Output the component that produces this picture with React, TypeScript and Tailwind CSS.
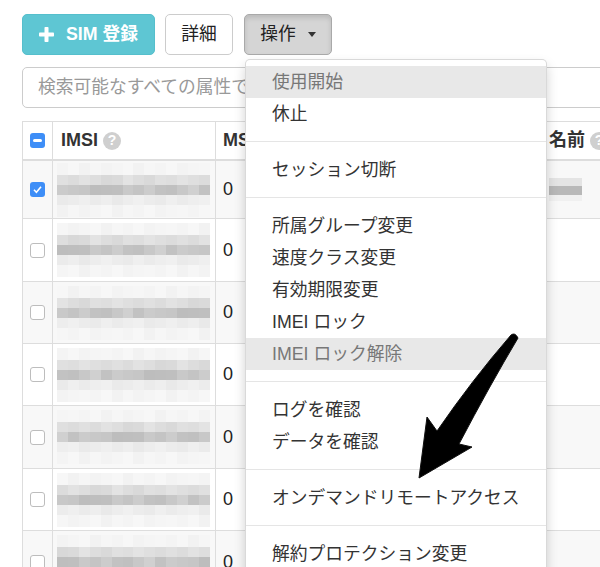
import React from "react";

const FONT = { fontFamily: '"Liberation Sans", "Noto Sans CJK JP", sans-serif' };

const faint = ["#f4f4f4", "#f7f7f7", "#f2f2f2", "#f6f6f6", "#f3f3f3", "#f5f5f5", "#f7f7f7", "#f2f2f2", "#f6f6f6", "#f4f4f4", "#f7f7f7", "#f3f3f3", "#f5f5f5", "#f6f6f6"];
const light = ["#e0e0e0", "#dcdcdc", "#e2e2e2", "#dedede", "#d8d8d8", "#dadada", "#e3e3e3", "#dddddd", "#d9d9d9", "#e0e0e0", "#dedede", "#e3e3e3", "#dfdfdf", "#dcdcdc"];
const dark = ["#c2c2c2", "#cbcbcb", "#c8c8c8", "#c6c6c6", "#bdbdbd", "#bebebe", "#bfbfbf", "#c9c9c9", "#c4c4c4", "#cccccc", "#c2c2c2", "#c0c0c0", "#c8c8c8", "#d0d0d0"];
const light2 = ["#eaeaea", "#ececec", "#efefef", "#ebebeb", "#eeeeee", "#e9e9e9", "#ededed", "#f0f0f0", "#ececec", "#eaeaea", "#efefef", "#ebebeb", "#eeeeee", "#f0f0f0"];

function Band({ shades, h, shift }: { shades: string[]; h: number; shift: number }) {
  return (
    <div className="flex" style={{ height: h }}>
      {shades.map((_, i) => (
        <div key={i} className="flex-1" style={{ background: shades[(i + shift) % shades.length] }} />
      ))}
    </div>
  );
}

function Mosaic({ shift }: { shift: number }) {
  return (
    <div className="w-[153px] flex flex-col">
      <Band shades={faint} h={12} shift={shift} />
      <Band shades={light} h={10} shift={shift} />
      <Band shades={dark} h={10} shift={shift + 1} />
      <Band shades={light2} h={10} shift={shift} />
      <Band shades={faint} h={12} shift={shift + 2} />
    </div>
  );
}

function Help() {
  return (
    <span className="ml-[5px] inline-flex w-[18px] h-[18px] rounded-full bg-[#cfcfcf] text-white text-[14px] font-bold items-center justify-center">
      ?
    </span>
  );
}

const rowHeights = [58, 63, 62, 62, 63, 62, 63];

type Item = { label: string; muted?: boolean } | "divider";

const menu: Item[] = [
  { label: "使用開始", muted: true },
  { label: "休止" },
  "divider",
  { label: "セッション切断" },
  "divider",
  { label: "所属グループ変更" },
  { label: "速度クラス変更" },
  { label: "有効期限変更" },
  { label: "IMEI ロック" },
  { label: "IMEI ロック解除", muted: true },
  "divider",
  { label: "ログを確認" },
  { label: "データを確認" },
  "divider",
  { label: "オンデマンドリモートアクセス" },
  "divider",
  { label: "解約プロテクション変更" },
];

export default function App() {
  return (
    <div className="relative w-[600px] h-[567px] overflow-hidden bg-white text-[#333]" style={FONT}>
      <div className="w-[760px] pl-[22px] pt-[14px]">
        {/* toolbar */}
        <div className="flex items-center">
          <button className="w-[133px] h-[41px] rounded-[5px] bg-[#5ec6d3] border border-[#55bfcc] text-white text-[17.75px] font-bold flex items-center justify-center gap-[12px]">
            <svg width="15" height="15" viewBox="0 0 15 15">
              <rect x="5.5" y="0" width="4" height="15" rx="0.8" fill="white" />
              <rect x="0" y="5.5" width="15" height="4" rx="0.8" fill="white" />
            </svg>
            SIM 登録
          </button>
          <button className="ml-[10px] w-[68px] h-[41px] rounded-[5px] bg-white border border-[#ccc] text-[17.75px] text-[#222]">
            詳細
          </button>
          <button className="ml-[11px] w-[88px] h-[41px] rounded-[5px] bg-[#d5d5d5] border border-[#a9a9a9] shadow-[inset_0_3px_5px_rgba(0,0,0,0.125)] text-[17.75px] text-[#222] flex items-center justify-center gap-[12px]">
            操作
            <span className="w-0 h-0 border-l-[4.5px] border-r-[4.5px] border-t-[5px] border-l-transparent border-r-transparent border-t-[#333]" />
          </button>
        </div>

        {/* search */}
        <div className="mt-[12px] h-[41px] w-[700px] rounded-[5px] border border-[#ccc] flex items-center pl-[15px] text-[17.75px] text-[#999]">
          検索可能なすべての属性で検索
        </div>

        {/* table */}
        <div className="mt-[13px] w-[720px] border-t border-l border-[#ddd]">
          <div className="flex h-[39px] border-b-2 border-[#ddd] font-bold text-[18px] text-[#333]">
            <div className="w-[30px] border-r border-[#ddd] flex items-center justify-center">
              <span className="w-[15px] h-[15px] rounded-[3px] bg-[#3e8ef7] flex items-center justify-center">
                <span className="w-[9px] h-[2.5px] bg-white rounded-full" />
              </span>
            </div>
            <div className="w-[163px] border-r border-[#ddd] flex items-center px-[8px]">
              IMSI
              <Help />
            </div>
            <div className="w-[325px] border-r border-[#ddd] flex items-center px-[7px]">MSISDN</div>
            <div className="flex-1 flex items-center px-[8px]">
              名前
              <Help />
            </div>
          </div>
          {rowHeights.map((h, i) => (
            <div
              key={i}
              className={`flex border-b border-[#ddd] ${i % 2 === 0 ? "bg-[#f8f8f8]" : "bg-white"}`}
              style={{ height: h }}
            >
              <div className="w-[30px] border-r border-[#ddd] flex items-center justify-center">
                {i === 0 ? (
                  <span className="w-[15px] h-[15px] rounded-[3px] bg-[#3e8ef7] flex items-center justify-center">
                    <svg width="11" height="11" viewBox="0 0 11 11">
                      <path d="M2 5.8 L4.4 8.2 L9 2.8" stroke="white" strokeWidth="1.6" fill="none" />
                    </svg>
                  </span>
                ) : (
                  <span className="w-[15px] h-[15px] rounded-[3px] border border-[#bdbdbd] bg-white" />
                )}
              </div>
              <div className="w-[163px] border-r border-[#ddd] flex items-center pl-[4px]">
                <Mosaic shift={i * 3} />
              </div>
              <div className="w-[325px] border-r border-[#ddd] flex items-center px-[7px] text-[18px] text-[#222]">0</div>
              <div className="flex-1 flex items-center px-[8px]">
                {i === 0 && (
                  <div className="w-[33px] flex flex-col">
                    <div className="h-[8px] bg-[#e4e4e4]" />
                    <div className="h-[9px] bg-[#b8b8b8]" />
                    <div className="h-[6px] bg-[#f0f0f0]" />
                  </div>
                )}
              </div>
            </div>
          ))}
        </div>
      </div>

      {/* dropdown menu */}
      <div className="absolute left-[245px] top-[59px] w-[302px] bg-white border border-[rgba(0,0,0,0.15)] rounded-[5px] shadow-[0_6px_12px_rgba(0,0,0,0.175)] py-[6px] text-[17.75px]">
        {menu.map((it, i) =>
          it === "divider" ? (
            <div key={i} className="h-px bg-[#e5e5e5] mt-[11px] mb-[12px]" />
          ) : (
            <div
              key={i}
              className={`h-[32px] flex items-center pl-[26px] whitespace-nowrap ${
                it.muted ? "bg-[#e8e8e8] text-[#777]" : "text-[#333]"
              }`}
            >
              {it.label}
            </div>
          )
        )}
      </div>

      {/* annotation arrow */}
      <svg className="absolute left-0 top-0 pointer-events-none" width="600" height="567">
        <path
          d="M511 335 Q515 332 518 338 Q490 385 459 444 L472 447 L419 478 L427 417 L437 431 Q472 380 511 335 Z"
          fill="#000"
          stroke="#111"
          strokeWidth="1"
          strokeLinejoin="round"
        />
      </svg>
    </div>
  );
}
